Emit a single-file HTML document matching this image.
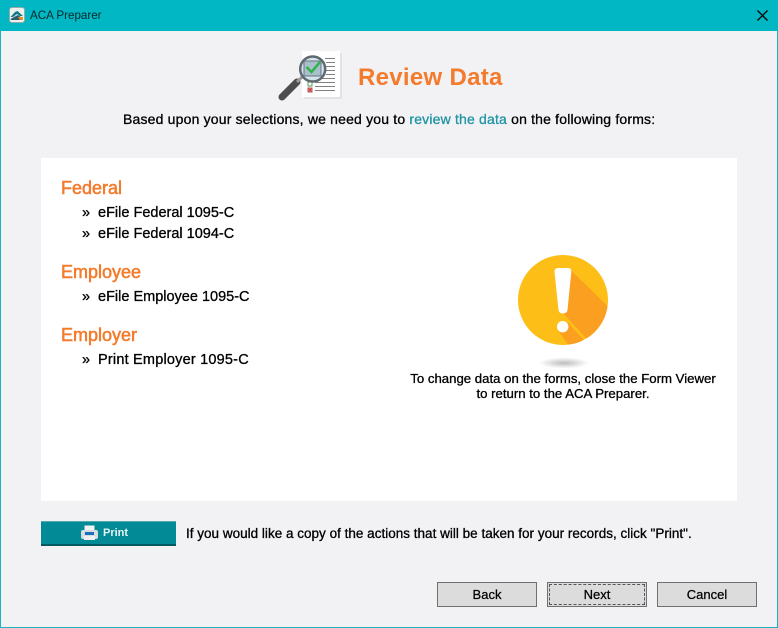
<!DOCTYPE html>
<html>
<head>
<meta charset="utf-8">
<title>ACA Preparer</title>
<style>
html,body{margin:0;padding:0;width:778px;height:628px;overflow:hidden;background:#f2f2f5;font-family:"Liberation Sans",sans-serif;color:#000}
.a{position:absolute;white-space:nowrap}
#win{position:absolute;left:0;top:0;width:776px;height:627px;border:1px solid #1cb2bf;border-top:0;background:#f2f2f5}
#bar{position:absolute;left:0;top:0;width:778px;height:31px;background:#00b7c3}
.h{font-size:18px;font-weight:400;color:#f47b2c;-webkit-text-stroke:.55px #f47b2c;line-height:22px}
.li{font-size:14.5px;line-height:20px;color:#000;-webkit-text-stroke:.3px #000}
.t{font-size:13px;line-height:18px;-webkit-text-stroke:.3px #000}
.btn{position:absolute;top:582px;width:98px;height:23px;border:1px solid #707070;background:#dcdcdc;font-size:13px;line-height:23px;text-align:center;-webkit-text-stroke:.25px #000}
</style>
</head>
<body>
<div id="win"></div>
<div id="bar"></div>

<svg class="a" style="left:9px;top:7px" width="16" height="16" viewBox="0 0 16 16">
<rect x=".5" y=".5" width="15" height="15" rx="2.5" fill="#eef0ee" stroke="#9aa"/>
<path d="M1.5 10 L6 5 L8.5 4 L14 9 L11 9 L8 7 L4 10 Z" fill="#0d7a8c"/>
<path d="M1.5 12 L5 10 L9 8 L13 11 L14 13 L2 13 Z" fill="#2b5e6a"/>
<path d="M9 10 L14 10 L14 13 L11 13 Z" fill="#f08a24"/>
</svg>
<div class="a" style="left:30px;top:7px;font-size:11.6px;line-height:17px;color:#03262c">ACA Preparer</div>
<svg class="a" style="left:757px;top:10px" width="11" height="11" viewBox="0 0 11 11"><path d="M.5.5 L10.5 10.5 M10.5.5 L.5 10.5" stroke="#000" stroke-width="1.3" fill="none"/></svg>

<!-- header icon -->
<svg class="a" style="left:276px;top:50px" width="68" height="54" viewBox="0 0 68 54">
<rect x="28" y="3" width="38" height="46" fill="#e2e2e2"/>
<rect x="26" y="1" width="38" height="46" fill="#fff"/>
<g stroke="#808080" stroke-width="1"><path d="M49 8.500H59M50 12.500H59M50 16.500H59M50 20.500H59M50 24.500H59M46 28.500H59M39 32.500H59M39 36.500H59M39 40.500H59"/></g>
<rect x="32" y="32" width="4" height="4" fill="#fff" stroke="#4aa05a"/>
<rect x="32" y="38" width="4" height="4" fill="#eee" stroke="#b55"/>
<path d="M32.500 38.500 L35.500 41.500 M35.500 38.500 L32.500 41.500" stroke="#c33" stroke-width="1"/>
<path d="M6 47 L21 32" stroke="#4d4d4d" stroke-width="7" stroke-linecap="round"/>
<path d="M21 32 L26 27" stroke="#9a9a9a" stroke-width="3"/>
<circle cx="36.700" cy="19" r="12.500" fill="#d5e4ec" stroke="#5f6a70" stroke-width="2.500"/>
<rect x="28" y="11" width="17" height="15" fill="#a9bfcc" stroke="#68767e" stroke-width="1"/>
<path d="M30.500 17 L35.500 22 L44 12" fill="none" stroke="#2fb34a" stroke-width="2.500"/>
</svg>

<div class="a" style="left:358px;top:63px;font-size:24px;line-height:30px;font-weight:700;color:#f47b2c;letter-spacing:.3px">Review Data</div>
<div class="a t" style="left:123px;top:110px;font-size:14px;letter-spacing:.18px">Based upon your selections, we need you to <span style="color:#1f94a4;-webkit-text-stroke:.3px #1f94a4">review the data</span> on the following forms:</div>

<div class="a" style="left:41px;top:158px;width:696px;height:343px;background:#fff"></div>

<div class="a h" style="left:61px;top:177px">Federal</div>
<div class="a li" style="left:82px;top:203px">»</div><div class="a li" style="left:98px;top:203px">eFile Federal 1095-C</div>
<div class="a li" style="left:82px;top:224px">»</div><div class="a li" style="left:98px;top:224px">eFile Federal 1094-C</div>
<div class="a h" style="left:61px;top:261px">Employee</div>
<div class="a li" style="left:82px;top:287px">»</div><div class="a li" style="left:98px;top:287px">eFile Employee 1095-C</div>
<div class="a h" style="left:61px;top:324px">Employer</div>
<div class="a li" style="left:82px;top:350px">»</div><div class="a li" style="left:98px;top:350px;letter-spacing:.2px">Print Employer 1095-C</div>

<!-- warning icon -->
<svg class="a" style="left:510px;top:250px" width="106" height="122" viewBox="0 0 106 122">
<defs><radialGradient id="s"><stop offset="0" stop-color="#bdbdbd"/><stop offset="1" stop-color="#fff"/></radialGradient>
<clipPath id="c"><circle cx="53" cy="50" r="45"/></clipPath></defs>
<ellipse cx="54" cy="113" rx="25" ry="5.500" fill="url(#s)"/>
<circle cx="53" cy="50" r="45" fill="#fdbe17"/>
<path clip-path="url(#c)" d="M60.700 20 L120 78 L80 92 L76 88.300 L52 62 Z" fill="#fb9f20"/>
<path clip-path="url(#c)" d="M57.700 72.300 L80 97 L65 105 L48 80 Z" fill="#fb9f20"/>
<path d="M48 18 H58 Q61.500 18 61.300 22 L57.500 60 Q57 63.500 53 63.500 Q49 63.500 48.500 60 L44.500 22 Q44.500 18 48 18 Z" fill="#fff"/>
<circle cx="52.700" cy="76.700" r="5.700" fill="#fff"/>
</svg>

<div class="a t" style="left:389px;top:371px;width:348px;text-align:center;font-size:13.2px;white-space:normal;line-height:15px">To change data on the forms, close the Form Viewer<br>to return to the ACA Preparer.</div>

<!-- Print -->
<div class="a" style="left:41px;top:521px;width:135px;height:25px;background:#028a96;border-top:1px solid #55aab2;border-bottom:2px solid #045a60;box-sizing:border-box"></div>
<svg class="a" style="left:80px;top:525px" width="19" height="16" viewBox="0 0 19 16">
<rect x="4.500" y="0.500" width="10" height="5" fill="#f2f2f2"/>
<rect x="1" y="5" width="17" height="9" rx="2" fill="#d8dde0"/>
<rect x="5" y="7" width="9" height="3" fill="#1b6fc0"/>
<rect x="4" y="11" width="11" height="4" fill="#eef0f2"/>
</svg>
<div class="a" style="left:103px;top:526px;font-size:11px;line-height:15px;font-weight:700;color:#e6f3f4">Print</div>
<div class="a t" style="left:186px;top:525px;font-size:13.5px;letter-spacing:.01px">If you would like a copy of the actions that will be taken for your records, click "Print".</div>

<div class="btn" style="left:437px">Back</div>
<div class="btn" style="left:547px">Next<div style="position:absolute;left:1px;top:1px;right:1px;bottom:1px;border:1px dashed #555"></div></div>
<div class="btn" style="left:657px">Cancel</div>
</body>
</html>
